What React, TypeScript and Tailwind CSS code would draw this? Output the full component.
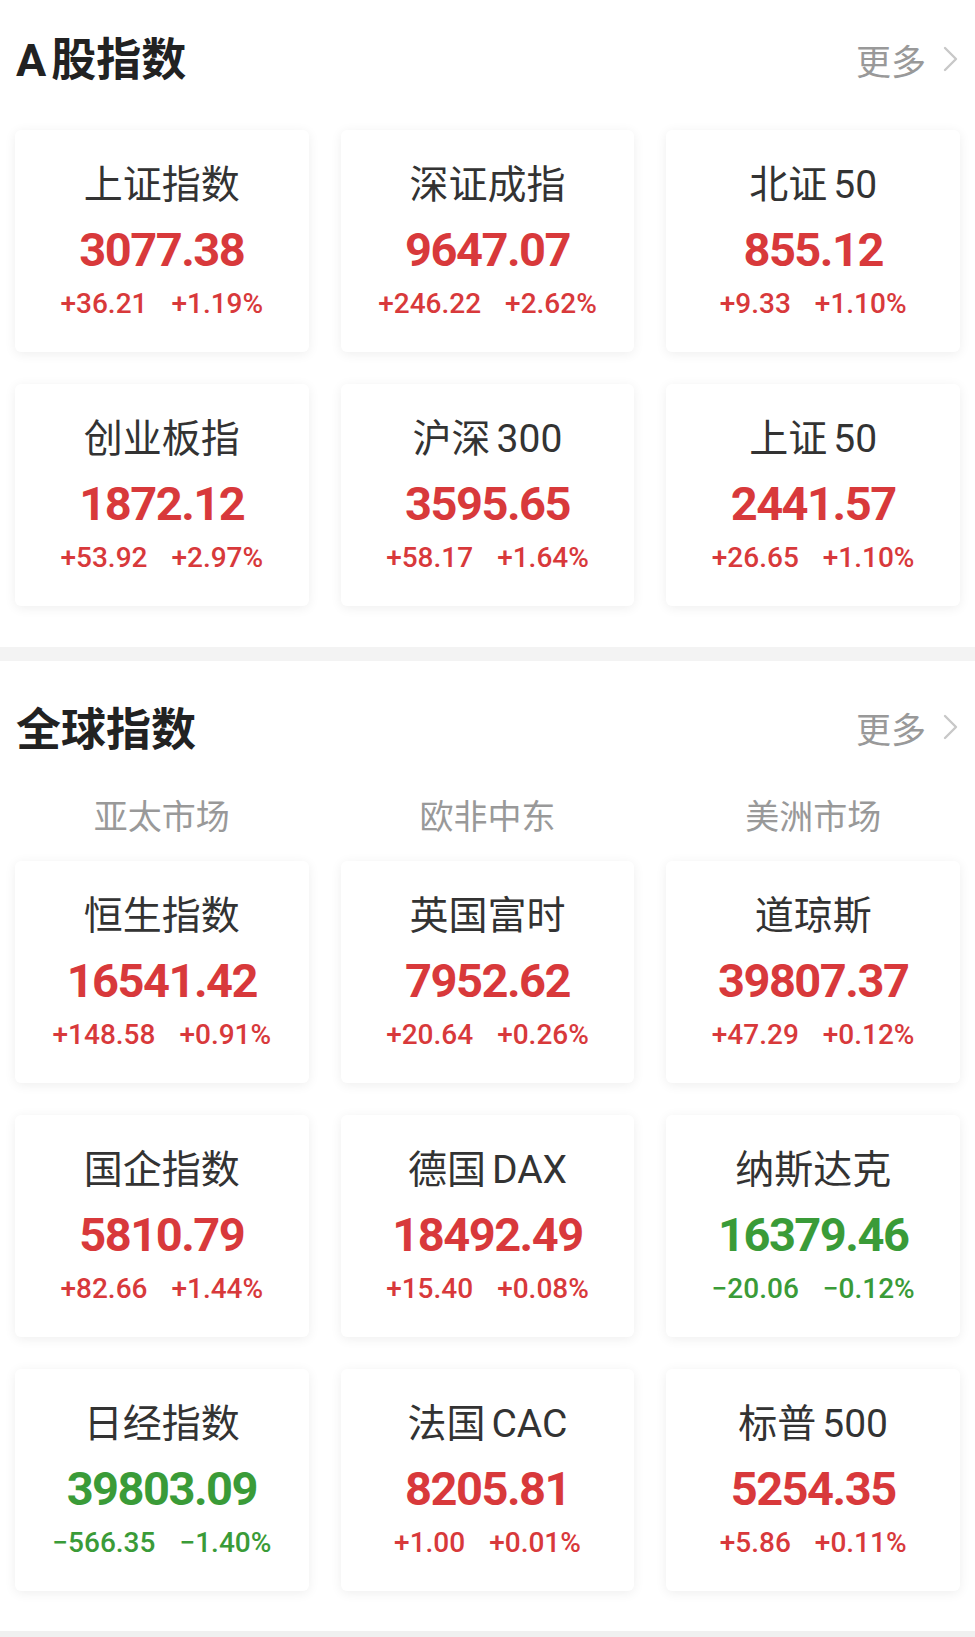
import React from "react";

type Item = { name: string; price: string; chg: string; pct: string; up: boolean };

const aShares: Item[] = [
  { name: "上证指数", price: "3077.38", chg: "+36.21", pct: "+1.19%", up: true },
  { name: "深证成指", price: "9647.07", chg: "+246.22", pct: "+2.62%", up: true },
  { name: "北证 50", price: "855.12", chg: "+9.33", pct: "+1.10%", up: true },
  { name: "创业板指", price: "1872.12", chg: "+53.92", pct: "+2.97%", up: true },
  { name: "沪深 300", price: "3595.65", chg: "+58.17", pct: "+1.64%", up: true },
  { name: "上证 50", price: "2441.57", chg: "+26.65", pct: "+1.10%", up: true },
];

const globals: Item[] = [
  { name: "恒生指数", price: "16541.42", chg: "+148.58", pct: "+0.91%", up: true },
  { name: "英国富时", price: "7952.62", chg: "+20.64", pct: "+0.26%", up: true },
  { name: "道琼斯", price: "39807.37", chg: "+47.29", pct: "+0.12%", up: true },
  { name: "国企指数", price: "5810.79", chg: "+82.66", pct: "+1.44%", up: true },
  { name: "德国 DAX", price: "18492.49", chg: "+15.40", pct: "+0.08%", up: true },
  { name: "纳斯达克", price: "16379.46", chg: "−20.06", pct: "−0.12%", up: false },
  { name: "日经指数", price: "39803.09", chg: "−566.35", pct: "−1.40%", up: false },
  { name: "法国 CAC", price: "8205.81", chg: "+1.00", pct: "+0.01%", up: true },
  { name: "标普 500", price: "5254.35", chg: "+5.86", pct: "+0.11%", up: true },
];

function Header({ title, latin }: { title: string; latin?: string }) {
  return (
    <div className="flex h-full items-center justify-between pl-[1px] pr-[2px]">
      <div className="text-[45px] font-bold leading-[50px] text-[#222222] font-['Noto_Sans_CJK_SC',sans-serif]">
        {latin && <span className="mr-[5px] font-['Roboto',sans-serif]">{latin}</span>}
        <span>{title}</span>
      </div>
      <div className="flex items-center gap-[17px]">
        <span className="text-[35px] leading-none text-[#999999] font-['Noto_Sans_CJK_SC',sans-serif]">更多</span>
        <svg width="15" height="26" viewBox="0 0 15 26" fill="none">
          <path d="M2 2 L13 13 L2 24" stroke="#c8c8c8" strokeWidth="2.4" strokeLinecap="round" strokeLinejoin="round" />
        </svg>
      </div>
    </div>
  );
}

function Card({ item }: { item: Item }) {
  const color = item.up ? "text-[#d8393b]" : "text-[#3a9b38]";
  const [cjk, latin] = item.name.split(" ");
  return (
    <div className="flex h-[222px] flex-col items-center rounded-[6px] bg-white pt-[33px] shadow-[0_2px_12px_rgba(0,0,0,0.07)]">
      <div className="h-[44px] whitespace-nowrap text-[39px] leading-[44px] text-[#333333] font-['Roboto','Noto_Sans_CJK_SC',sans-serif]">
        <span>{cjk}</span>
        {latin && <span className="ml-[6px]">{latin}</span>}
      </div>
      <div className={`mt-[15px] h-[56px] text-[47px] font-bold leading-[56px] tracking-[-1.5px] ${color} font-['Roboto',sans-serif]`}>
        {item.price}
      </div>
      <div className={`mt-[10px] flex h-[32px] items-center gap-[24px] text-[28px] font-medium leading-[32px] ${color} font-['Roboto',sans-serif]`}>
        <span>{item.chg}</span>
        <span>{item.pct}</span>
      </div>
    </div>
  );
}

export default function App() {
  return (
    <div className="min-h-[1637px] w-[975px] bg-white">
      <section className="px-[15px] pb-[41px]">
        <div className="h-[118px]">
          <Header latin="A" title="股指数" />
        </div>
        <div className="mt-[12px] grid grid-cols-3 gap-x-[32px] gap-y-[32px]">
          {aShares.map((it) => (
            <Card key={it.name} item={it} />
          ))}
        </div>
      </section>
      <div className="h-[14px] bg-[#f3f3f3]" />
      <section className="px-[15px] pb-[40px]">
        <div className="h-[132px]">
          <Header title="全球指数" />
        </div>
        <div className="grid h-[44px] grid-cols-3 items-center gap-x-[32px] text-center text-[34px] leading-[44px] text-[#999999] font-['Noto_Sans_CJK_SC',sans-serif]">
          <div>亚太市场</div>
          <div>欧非中东</div>
          <div>美洲市场</div>
        </div>
        <div className="mt-[24px] grid grid-cols-3 gap-x-[32px] gap-y-[32px]">
          {globals.map((it) => (
            <Card key={it.name} item={it} />
          ))}
        </div>
      </section>
      <div className="h-[6px] bg-[#f0f0f0]" />
    </div>
  );
}
